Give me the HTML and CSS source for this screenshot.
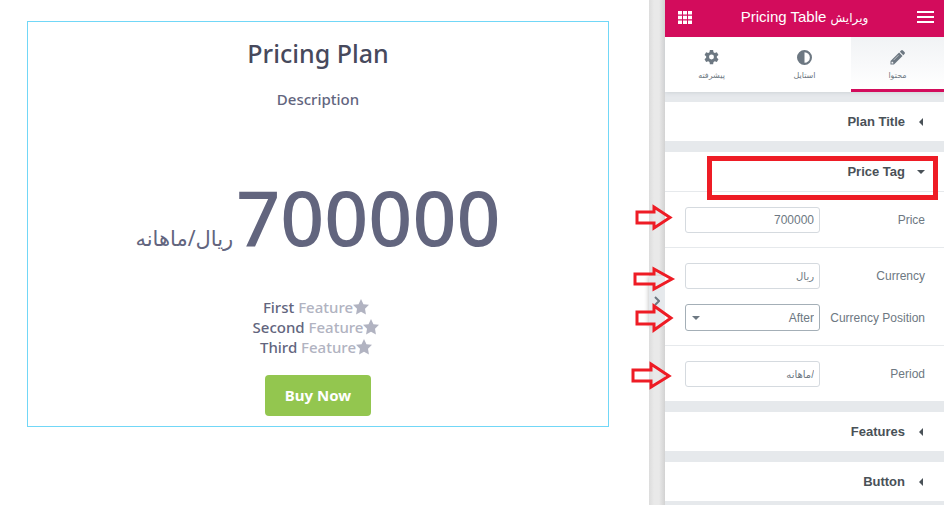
FILE: index.html
```html
<!DOCTYPE html>
<html lang="fa">
<head>
<meta charset="utf-8">
<meta name="viewport" content="width=device-width, initial-scale=1">
<title>Pricing Table</title>
<link rel="stylesheet" href="styles.css">
</head>
<body>
<div class="editor">
  <main class="preview">
    <article class="plan">
      <h1 class="plan-title">Pricing Plan</h1>
      <p class="plan-description">Description</p>
      <p class="plan-price" dir="rtl"><span class="amount">700000</span><span class="unit">ریال/ماهانه</span></p>
      <ul class="features">
        <li>First <span>Feature</span><svg class="star" viewBox="0 0 24 24" aria-hidden="true"><path d="M12 0l3.700 7.700 8.300 1.100-6 5.900 1.400 8.400L12 19.100l-7.400 4 1.400-8.400-6-5.900 8.300-1.100z"/></svg></li>
        <li>Second <span>Feature</span><svg class="star" viewBox="0 0 24 24" aria-hidden="true"><path d="M12 0l3.700 7.700 8.300 1.100-6 5.900 1.400 8.400L12 19.100l-7.400 4 1.400-8.400-6-5.900 8.300-1.100z"/></svg></li>
        <li>Third <span>Feature</span><svg class="star" viewBox="0 0 24 24" aria-hidden="true"><path d="M12 0l3.700 7.700 8.300 1.100-6 5.900 1.400 8.400L12 19.100l-7.400 4 1.400-8.400-6-5.900 8.300-1.100z"/></svg></li>
      </ul>
      <a class="buy" href="#">Buy Now</a>
    </article>
  </main>
  <div class="gutter">
    <button class="collapse" type="button" aria-label="Collapse"><svg viewBox="0 0 6 10"><path d="M1 1l4 4-4 4"/></svg></button>
  </div>
  <aside class="panel" dir="rtl">
    <header class="panel-header">
      <button class="icon-button" type="button" aria-label="Menu"><svg width="17" height="12" viewBox="0 0 17 12"><path d="M0 0h17v2H0zM0 5h17v2H0zM0 10h17v2H0z"/></svg></button>
      <h2><span>ویرایش</span> Pricing Table</h2>
      <button class="icon-button" type="button" aria-label="Widgets"><svg width="14" height="13" viewBox="0 0 14 13"><path d="M0 0h4v3.600H0zM5 0h4v3.600H5zM10 0h4v3.600h-4zM0 4.700h4v3.600H0zM5 4.700h4v3.600H5zM10 4.700h4v3.600h-4zM0 9.400h4V13H0zM5 9.400h4V13H5zM10 9.400h4V13h-4z"/></svg></button>
    </header>
    <nav class="tabs">
      <button class="tab active" type="button"><svg viewBox="0 0 14 14"><path d="M10.300.5a1.300 1.300 0 0 1 1.800 0l1.400 1.400a1.300 1.300 0 0 1 0 1.800L12.400 4.800 9.200 1.600zM8.500 2.300l3.200 3.200-8 8L.4 13.600l.1-3.300zM1.400 11.300v1.400h1.400l.6-.6-1.400-1.400z" fill-rule="evenodd"/><path class="cut" d="M3.300 9.500l4.600-4.600"/></svg>محتوا</button>
      <button class="tab" type="button"><svg viewBox="0 0 14 14"><circle class="ring" cx="7" cy="7" r="6"/><path d="M7 1a6 6 0 0 0 0 12z"/></svg>استایل</button>
      <button class="tab" type="button"><svg viewBox="0 0 14 14"><path fill-rule="evenodd" d="M5.500 0h3l.4 2 1.200.7 1.900-.7 1.500 2.600L12 5.900v1.400l1.500 1.300-1.500 2.600-1.900-.6-1.200.7-.4 1.900h-3l-.4-1.900-1.200-.7-1.900.6L.5 8.600 2 7.300V5.900L.5 4.600 2 2l1.900.7L5.100 2zM7 4.300a2.300 2.300 0 1 0 0 4.600 2.300 2.300 0 0 0 0-4.600z"/></svg>پیشرفته</button>
    </nav>
    <div class="sections">
      <section class="section">
        <button class="section-toggle" type="button"><i class="caret"></i><span>Plan Title</span></button>
      </section>
      <section class="section">
        <button class="section-toggle open" type="button"><i class="caret"></i><span>Price Tag</span></button>
        <div class="highlight"></div>
        <div class="group">
          <div class="field">
            <label for="price">Price</label><input id="price" type="text" value="700000">
            <svg class="arrow" viewBox="0 0 40 26" aria-hidden="true"><path d="M4 5h17v-5L37 10.500 21 21v-5H4z"/></svg>
          </div>
        </div>
        <div class="group">
          <div class="field">
            <label for="currency">Currency</label><input id="currency" class="persian" type="text" value="ریال">
            <svg class="arrow" viewBox="0 0 40 26" aria-hidden="true"><path d="M2 11h19V6l18 10-18 10v-5H2z"/></svg>
          </div>
          <div class="field">
            <label for="position">Currency Position</label><span class="select-wrap"><select id="position"><option>After</option><option>Before</option></select></span>
            <svg class="arrow" viewBox="0 0 40 26" aria-hidden="true"><path d="M4 8h17V2l17 12-17 12v-6H4z"/></svg>
          </div>
        </div>
        <div class="group">
          <div class="field">
            <label for="period">Period</label><input id="period" class="persian" type="text" value="/ماهانه">
            <svg class="arrow" viewBox="0 0 40 26" aria-hidden="true"><path d="M0 9h18V3l18 12-18 11v-6H0z"/></svg>
          </div>
        </div>
      </section>
      <section class="section">
        <button class="section-toggle" type="button"><i class="caret"></i><span>Features</span></button>
      </section>
      <section class="section">
        <button class="section-toggle" type="button"><i class="caret"></i><span>Button</span></button>
      </section>
    </div>
  </aside>
</div>
</body>
</html>
```
FILE: styles.css
```css
* { box-sizing: border-box; }
body { margin: 0; background: #fff; overflow: hidden; }
h1, h2, p, ul { margin: 0; padding: 0; }
button { border: 0; background: none; padding: 0; font: inherit; color: inherit; cursor: pointer; }

.editor { display: flex; height: 100vh; }

.preview {
  flex: 1;
  padding: 21px 40px 0 27px;
  font-family: "Noto Sans", "DejaVu Sans", sans-serif;
  font-weight: 500;
  color: #62657e;
}
.plan {
  display: flex;
  flex-direction: column;
  align-items: center;
  padding: 12px 10px 10px;
  border: 1px solid #71d7f7;
}
.plan-title { font-size: 25px; line-height: 38px; font-weight: 500; color: #47495c; }
.plan-description { margin-top: 16px; font-size: 15px; line-height: 22px; }
.plan-price { margin-top: 48px; line-height: 20px; white-space: nowrap; }
.amount { font-size: 77px; line-height: 118px; }
.unit { font-size: 21px; line-height: 20px; font-weight: 400; margin-right: 3px; }
.features { margin-top: 21px; padding-right: 4px; list-style: none; font-size: 15px; line-height: 20px; text-align: center; }
.features span { color: #b1b3c1; }
.star { width: 16px; height: 16px; fill: #b1b3c1; vertical-align: -2px; }
.buy {
  margin-top: 18px;
  padding: 0 20px;
  border-radius: 4px;
  background: #93c64f;
  color: #fff;
  font-size: 15px;
  line-height: 41px;
  font-weight: 700;
  text-decoration: none;
}

.gutter {
  display: flex;
  align-items: center;
  width: 16px;
  padding-top: 97px;
  background: linear-gradient(to right, #dcdcdc, #e9e9e9 5px, #e9e9e9 10px, #d2d2d2);
}
.collapse { width: 16px; height: 50px; background: #e6e9ec; box-shadow: -1px 0 4px #ccc; }
.collapse svg { width: 6px; height: 10px; fill: none; stroke: #6d7882; stroke-width: 2; }

.panel {
  display: flex;
  flex-direction: column;
  width: 279px;
  background: #e6e9ec;
  font-family: "Liberation Sans", "DejaVu Sans", sans-serif;
  font-size: 12px;
  color: #6d7882;
}
.panel-header {
  position: relative;
  z-index: 1;
  display: flex;
  align-items: center;
  justify-content: space-between;
  height: 37px;
  padding: 0 10px 3px 13px;
  background: #d30c5c;
  color: #fff;
}
.panel-header h2 { font-size: 15px; font-weight: 400; line-height: 20px; }
.panel-header h2 span { font-size: 12px; }
.icon-button { display: flex; }
.icon-button svg { fill: currentColor; }

.tabs { display: flex; height: 55px; background: #fff; box-shadow: 0 1px 4px #cfd3d7; }
.tab {
  display: flex;
  flex: 1;
  flex-direction: column;
  align-items: center;
  gap: 3px;
  padding-top: 13px;
  border-bottom: 3px solid transparent;
  font-size: 8px;
  line-height: 15px;
}
.tab svg { width: 15px; height: 15px; fill: #6d7882; }
.tab .cut { fill: none; stroke: #fff; stroke-width: 0.500; }
.tab .ring { fill: none; stroke: #6d7882; stroke-width: 2; }
.tab.active { border-bottom-color: #d30c5c; background: linear-gradient(#f1f3f5, #fff); }

.sections { display: flex; flex-direction: column; gap: 11px; padding-top: 10px; }
.section { position: relative; background: #fff; }
.section-toggle {
  display: flex;
  align-items: center;
  gap: 12px;
  width: 100%;
  height: 39px;
  padding: 0 19px;
  color: #495157;
  font-size: 13px;
  font-weight: 700;
}
.caret { display: flex; justify-content: center; width: 8px; }
.caret::before { content: ""; border: solid transparent; border-width: 4px 4px 4px 0; border-right-color: #495157; }
.open .caret::before { border-width: 4px 4px 0; border-color: #495157 transparent transparent; }

.group {
  display: flex;
  flex-direction: column;
  gap: 15px;
  padding: 15px 19px 14px 20px;
  border-top: 1px solid #e6e9ec;
}
.field { position: relative; display: flex; align-items: center; justify-content: space-between; }
.field label { font-size: 12px; }
.field input, .field select {
  width: 135px;
  height: 26px;
  padding: 0 5px;
  border: 1px solid #d5dadf;
  border-radius: 3px;
  background: #fff;
  color: #6d7882;
  font-family: "Liberation Sans", "DejaVu Sans", sans-serif;
  font-size: 12px;
  outline: 0;
}
.field .persian { font-size: 10px; }
.field select { height: 27px; border-color: #a4afb7; appearance: none; }
.select-wrap { position: relative; display: flex; }
.select-wrap::after {
  content: "";
  position: absolute;
  left: 7px;
  top: 12px;
  border: 4px solid transparent;
  border-top-color: #6d7882;
  border-bottom: 0;
}

.highlight { position: absolute; left: 42px; right: 6px; top: 4px; height: 44px; border: 5px solid #ee1c25; z-index: 1; }
.arrow {
  position: absolute;
  left: -52px;
  top: 0;
  width: 40px;
  height: 26px;
  overflow: visible;
  fill: none;
  stroke: #ee1c25;
  stroke-width: 3;
}
```
